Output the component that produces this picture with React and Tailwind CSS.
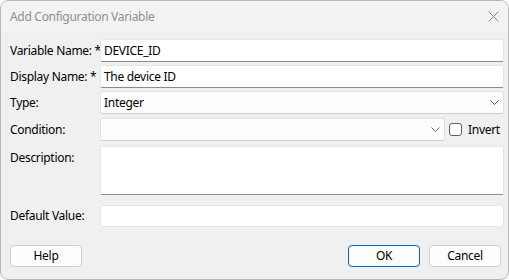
import React from "react";

function Chevron() {
  return (
    <svg width="9" height="5" viewBox="0 0 9 5" className="shrink-0">
      <path d="M0.5 0.5 L4.5 4.5 L8.5 0.5" fill="none" stroke="#606060" strokeWidth="1" />
    </svg>
  );
}

function Label({ children, top }) {
  return (
    <div className={`w-[99px] shrink-0 pl-[9px] whitespace-nowrap text-[12px] text-black ${top ? "pt-[3px] self-start" : ""}`}>
      {children}
    </div>
  );
}

export default function App() {
  return (
    <div
      className="w-[509px] h-[280px] bg-[#f0f0f0] border border-[#b9b9b9] rounded-[8px] overflow-hidden flex flex-col tracking-[-0.3px]"
      style={{ fontFamily: '"Segoe UI", "Noto Sans", "Open Sans", sans-serif' }}
    >
      <div className="h-[31px] shrink-0 bg-[#f3f3f3] flex items-center justify-between pl-[9px] pr-[9px]">
        <span className="text-[12px] text-[#8f8f8f]">Add Configuration Variable</span>
        <svg width="11" height="11" viewBox="0 0 11 11">
          <path d="M0.5 0.5 L10.5 10.5 M10.5 0.5 L0.5 10.5" stroke="#8a8a8a" strokeWidth="1" />
        </svg>
      </div>
      <div className="flex flex-col pt-[7px] pr-[4px]">
        <div className="flex items-center h-[23px]">
          <Label>Variable Name: *</Label>
          <div className="flex-1 h-[23px] bg-white border border-[#e6e6e6] border-b-[#8c8c8c] rounded-[2px] flex items-center px-[3px] text-[12px] text-black">
            DEVICE_ID
          </div>
        </div>
        <div className="flex items-center h-[23px] mt-[3px]">
          <Label>Display Name: *</Label>
          <div className="flex-1 h-[23px] bg-white border border-[#e6e6e6] border-b-[#8c8c8c] rounded-[2px] flex items-center px-[3px] text-[12px] text-black">
            The device ID
          </div>
        </div>
        <div className="flex items-center h-[23px] mt-[3px]">
          <Label>Type:</Label>
          <div className="flex-1 h-[23px] bg-[#fdfdfd] border border-[#e2e2e2] border-b-[#cfcfcf] rounded-[3px] flex items-center justify-between pl-[3px] pr-[4px] text-[12px] text-black">
            <span>Integer</span>
            <Chevron />
          </div>
        </div>
        <div className="flex items-center h-[23px] mt-[4px]">
          <Label>Condition:</Label>
          <div className="w-[345px] h-[23px] bg-[#fdfdfd] border border-[#e2e2e2] border-b-[#cfcfcf] rounded-[3px] flex items-center justify-end pr-[4px]">
            <Chevron />
          </div>
          <div className="ml-[4px] w-[13px] h-[13px] border border-[#5f5f5f] rounded-[3px] bg-white" />
          <span className="ml-[6px] text-[12px] text-black">Invert</span>
        </div>
        <div className="flex h-[49px] mt-[5px]">
          <Label top>Description:</Label>
          <div className="flex-1 h-[49px] bg-white border border-[#e6e6e6] border-b-[#8c8c8c] rounded-[2px]" />
        </div>
        <div className="flex items-center h-[22px] mt-[10px]">
          <Label>Default Value:</Label>
          <div className="flex-1 h-[22px] bg-white border border-[#e6e6e6] rounded-[2px]" />
        </div>
        <div className="flex items-center mt-[18px] pl-[9px] pr-[3px]">
          <div className="w-[72px] h-[22px] bg-[#fdfdfd] border border-[#d0d0d0] rounded-[4px] flex items-center justify-center text-[12px] text-black">
            Help
          </div>
          <div className="flex-1" />
          <div className="w-[72px] h-[22px] bg-[#fdfdfd] border border-[#0067c0] rounded-[4px] flex items-center justify-center text-[12px] text-black">
            OK
          </div>
          <div className="ml-[9px] w-[72px] h-[22px] bg-[#fdfdfd] border border-[#d0d0d0] rounded-[4px] flex items-center justify-center text-[12px] text-black">
            Cancel
          </div>
        </div>
      </div>
    </div>
  );
}
